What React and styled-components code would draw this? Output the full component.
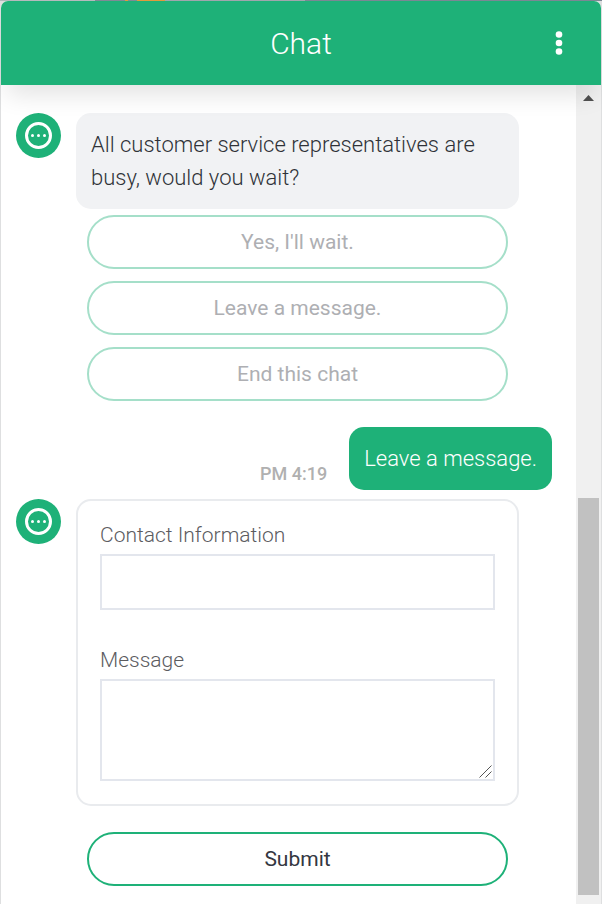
import React from "react";
import styled, { createGlobalStyle } from "styled-components";

const green = "#1eb178";

const GlobalStyle = createGlobalStyle`
  *, *::before, *::after { box-sizing: border-box; }
  body { margin: 0; background: #dedfe0; font-family: Roboto, "Liberation Sans", sans-serif; }
  button, input, textarea { font: inherit; }
`;

const Page = styled.div`
  min-height: 100vh;
  display: flex;
  flex-direction: column;
  padding: 0 1px;
`;

const Backdrop = styled.div`
  height: 1px;
  margin: 0 -1px;
  background: linear-gradient(90deg, #b5babd 0 95px, #818a96 95px 125px, #e39a3c 125px 128px, #818a96 128px 137px, #e39a3c 137px 165px, #a0a6ad 165px 305px, #7c8794 305px);
`;

const Window = styled.main`
  flex: 1;
  display: flex;
  flex-direction: column;
  background: #fff;
  border-radius: 7px 7px 0 0;
`;

const Header = styled.header`
  position: relative;
  z-index: 1;
  display: grid;
  grid-template-columns: 1fr auto 1fr;
  align-items: center;
  height: 84px;
  padding: 0 30px;
  background: ${green};
  color: #fff;
  border-radius: 7px 7px 0 0;
  box-shadow: 0 16px 24px -6px rgba(0, 0, 0, 0.11);
`;

const Title = styled.h1`
  grid-column: 2;
  margin: 0;
  padding-top: 2px;
  font-size: 30px;
  line-height: 40px;
  font-weight: 300;
`;

const MenuButton = styled.button`
  justify-self: end;
  display: flex;
  padding: 0;
  border: 0;
  background: none;
  color: #fff;
`;

const Body = styled.div`
  flex: 1;
  display: grid;
  grid-template-columns: 1fr 25px;
`;

const Conversation = styled.div`
  display: flex;
  flex-direction: column;
  padding: 28px 24px 18px 15px;
`;

const Turn = styled.section`
  display: grid;
  grid-template-columns: 45px 1fr;
  column-gap: 15px;
  margin-right: 33px;
`;

const Avatar = styled.svg`
  width: 45px;
  height: 45px;
`;

const Stack = styled.div`
  display: flex;
  flex-direction: column;
`;

const Bubble = styled.p`
  margin: 0;
  padding: 15px;
  border-radius: 15px;
  font-size: 22px;
  line-height: 33px;
  font-weight: 300;
  background: ${(p) => (p.$own ? green : "#f1f2f4")};
  color: ${(p) => (p.$own ? "#fff" : "#2f3238")};
`;

const Options = styled.div`
  display: flex;
  flex-direction: column;
  gap: 12px;
  margin: 6px 11px 0;
`;

const PillButton = styled.button`
  height: 54px;
  padding: 0 15px;
  border: 2px solid ${green};
  border-radius: 27px;
  background: #fff;
  color: #343741;
  font-size: 21px;
  line-height: 30px;
  font-weight: 400;

  &:disabled {
    border-color: #a5dfc9;
    color: #aeafb3;
  }
`;

const Reply = styled.section`
  display: flex;
  justify-content: flex-end;
  align-items: flex-end;
  gap: 22px;
  margin: 26px 0 9px;
`;

const Time = styled.time`
  padding-bottom: 4px;
  font-size: 18px;
  line-height: 24px;
  font-weight: 500;
  color: #b0b0b0;
`;

const Form = styled.form`
  display: flex;
  flex-direction: column;
`;

const Card = styled.div`
  display: flex;
  flex-direction: column;
  gap: 35px;
  padding: 19px 22px 23px;
  border: 2px solid #e9ebee;
  border-radius: 15px;
`;

const Field = styled.div`
  display: flex;
  flex-direction: column;
  gap: 4px;
`;

const Label = styled.label`
  font-size: 21px;
  line-height: 30px;
  font-weight: 300;
  color: #5c5c5f;
`;

const TextInput = styled.input`
  width: 100%;
  height: 56px;
  padding: 0 12px;
  border: 2px solid #e3e6ed;
  border-radius: 0;
  background: #fff;
  outline: none;
`;

const AreaWrap = styled.div`
  position: relative;
  display: flex;
`;

const TextArea = styled.textarea`
  width: 100%;
  height: 102px;
  padding: 12px;
  border: 2px solid #e3e6ed;
  border-radius: 0;
  background: #fff;
  resize: none;
  outline: none;
`;

const Grip = styled.svg`
  position: absolute;
  right: 3px;
  bottom: 3px;
  pointer-events: none;
`;

const Submit = styled.div`
  display: flex;
  flex-direction: column;
  margin: 26px 11px 0;
`;

const ScrollTrack = styled.div`
  display: flex;
  flex-direction: column;
  align-items: center;
  padding: 10px 2px 9px;
  background: #f0f0f0;
`;

const ScrollSpace = styled.div`
  flex: 397;
`;

const ScrollThumb = styled.div`
  flex: 397;
  width: 21px;
  background: #c1c1c1;
`;

function BotAvatar() {
  return (
    <Avatar viewBox="0 0 45 45" role="img" aria-label="Chat bot">
      <circle cx="22.5" cy="22.5" r="22.5" fill={green} />
      <circle cx="22.5" cy="22.5" r="12" fill="none" stroke="#fff" strokeWidth="3" />
      <circle cx="16.5" cy="22.5" r="1.5" fill="#fff" />
      <circle cx="22.5" cy="22.5" r="1.5" fill="#fff" />
      <circle cx="28.5" cy="22.5" r="1.5" fill="#fff" />
    </Avatar>
  );
}

const choices = ["Yes, I'll wait.", "Leave a message.", "End this chat"];

export default function App() {
  return (
    <>
      <GlobalStyle />
      <Page>
        <Backdrop />
        <Window>
          <Header>
            <Title>Chat</Title>
            <MenuButton type="button" aria-label="Menu">
              <svg width="24" height="24" viewBox="0 0 24 24" fill="currentColor">
                <circle cx="12" cy="3.5" r="3.3" />
                <circle cx="12" cy="12" r="3.3" />
                <circle cx="12" cy="20.5" r="3.3" />
              </svg>
            </MenuButton>
          </Header>
          <Body>
            <Conversation>
              <Turn>
                <BotAvatar />
                <Stack>
                  <Bubble>
                    All customer service representatives are
                    <br />
                    busy, would you wait?
                  </Bubble>
                  <Options>
                    {choices.map((choice) => (
                      <PillButton key={choice} type="button" disabled>
                        {choice}
                      </PillButton>
                    ))}
                  </Options>
                </Stack>
              </Turn>
              <Reply>
                <Time dateTime="16:19">PM 4:19</Time>
                <Bubble $own>Leave a message.</Bubble>
              </Reply>
              <Turn>
                <BotAvatar />
                <Form onSubmit={(e) => e.preventDefault()}>
                  <Card>
                    <Field>
                      <Label htmlFor="contact">Contact Information</Label>
                      <TextInput id="contact" type="text" />
                    </Field>
                    <Field>
                      <Label htmlFor="message">Message</Label>
                      <AreaWrap>
                        <TextArea id="message" />
                        <Grip width="13" height="13" viewBox="0 0 13 13" stroke="#555" strokeWidth="1">
                          <path d="M0.5 12.5 12.5 0.5M6.5 12.5 12.5 6.5" />
                        </Grip>
                      </AreaWrap>
                    </Field>
                  </Card>
                  <Submit>
                    <PillButton type="submit">Submit</PillButton>
                  </Submit>
                </Form>
              </Turn>
            </Conversation>
            <ScrollTrack aria-hidden="true">
              <svg width="11" height="6" viewBox="0 0 11 6" fill="#505050">
                <path d="M0 6 5.5 0 11 6Z" />
              </svg>
              <ScrollSpace />
              <ScrollThumb />
            </ScrollTrack>
          </Body>
        </Window>
      </Page>
    </>
  );
}
